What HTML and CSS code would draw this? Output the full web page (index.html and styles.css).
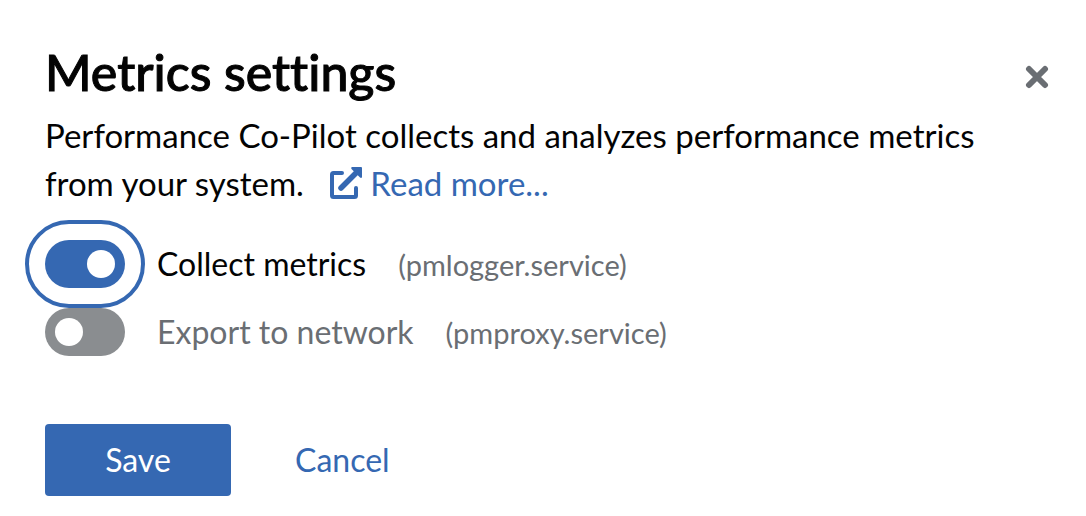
FILE: index.html
```html
<!DOCTYPE html>
<html lang="en">
<head>
<meta charset="utf-8">
<title>Metrics settings</title>
<link rel="stylesheet" href="styles.css">
</head>
<body>
<main class="dialog" role="dialog" aria-labelledby="title">
  <header class="header">
    <h1 class="title" id="title">Metrics settings</h1>
    <button class="close" type="button" aria-label="Close">
      <svg viewBox="0 0 24 24" width="24" height="24" aria-hidden="true"><path d="M4 4 20 20M20 4 4 20" fill="none" stroke="currentColor" stroke-width="6" stroke-linecap="round"/></svg>
    </button>
  </header>
  <p class="description">Performance Co-Pilot collects and analyzes performance metrics from your system. <a class="link" href="#"><svg class="link-icon" viewBox="0 0 32 32" width="32" height="32" aria-hidden="true"><path d="M12 6H3.500Q2 6 2 7.500V28.500Q2 30 3.500 30H24.500Q26 30 26 28.500V21" fill="none" stroke="currentColor" stroke-width="4" stroke-linecap="round"/><path d="M11 21 27 5" fill="none" stroke="currentColor" stroke-width="5.500" stroke-linecap="round"/><path d="M22 0H31Q32 0 32 1V10Q31.500 11.500 30 10.500L21.500 2Q20.500 .5 22 0Z" fill="currentColor"/></svg>Read more...</a></p>
  <form class="form">
    <label class="option">
      <input class="switch" type="checkbox" role="switch" checked autofocus>
      <span class="name">Collect metrics</span>
      <span class="service">(pmlogger.service)</span>
    </label>
    <label class="option option-off">
      <input class="switch" type="checkbox" role="switch" disabled>
      <span class="name">Export to network</span>
      <span class="service">(pmproxy.service)</span>
    </label>
    <footer class="actions">
      <button class="button primary" type="button">Save</button>
      <button class="button plain" type="button">Cancel</button>
    </footer>
  </form>
</main>
</body>
</html>
```
FILE: styles.css
```css
* { box-sizing: border-box; }
body {
  margin: 0;
  background: #fff;
  color: #030303;
  font: 32px/48px Lato, "Open Sans", sans-serif;
  font-variant-ligatures: none;
}
button { font: inherit; border: 0; cursor: pointer; }
.dialog { padding: 42px 37px 20px 45px; }
.header { display: flex; align-items: flex-start; justify-content: space-between; }
.title { margin: 0; font-size: 50px; line-height: 60px; font-weight: 500; -webkit-text-stroke: 1px currentColor; }
.close { display: flex; margin-top: 23px; padding: 0; background: none; color: #6a6e73; }
.description { margin: 0; padding-top: 9px; max-width: 944px; font-size: 33px; }
.link { margin-left: 18px; color: #3568b2; text-decoration: none; white-space: nowrap; }
.link-icon { margin-right: 8px; vertical-align: -3px; }
.form { padding-top: 33px; }
.option { display: flex; align-items: center; height: 48px; }
.option-off { margin-top: 20px; color: #6a6e73; }
.switch {
  appearance: none;
  flex: none;
  width: 80px;
  height: 48px;
  margin: 0 32px 0 0;
  padding: 10px;
  border-radius: 24px;
  background: #8a8d90;
}
.switch::before {
  content: "";
  display: block;
  width: 28px;
  height: 28px;
  border-radius: 50%;
  background: #fff;
}
.switch:checked { background: #3568b2; outline: 4px solid #3568b2; outline-offset: 16px; }
.switch:checked::before { margin-left: auto; }
.service { margin-left: 32px; padding-top: 2px; color: #6a6e73; font-size: 29px; }
.actions { display: flex; gap: 32px; padding-top: 68px; }
.button { height: 72px; padding: 12px 32px; border-radius: 4px; }
.primary { min-width: 186px; background: #3568b2; color: #fff; }
.plain { background: none; color: #3568b2; }
```
